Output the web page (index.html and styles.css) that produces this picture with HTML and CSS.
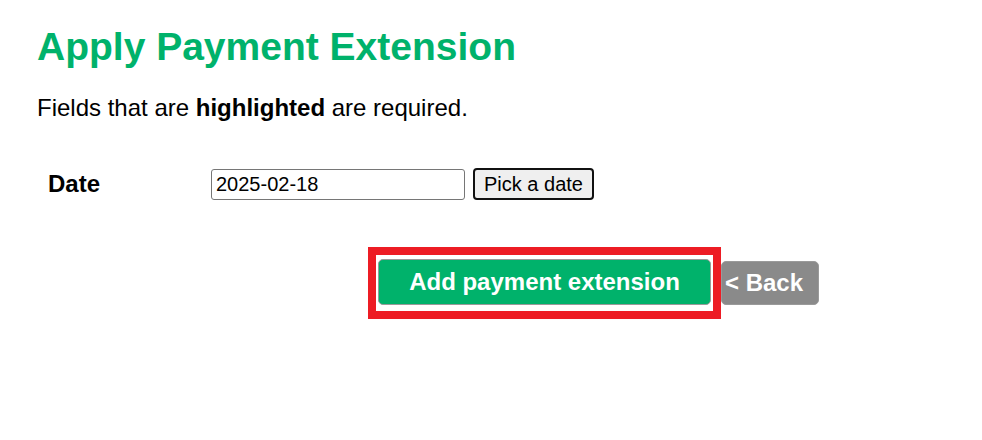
FILE: index.html
```html
<!DOCTYPE html>
<html lang="en">
<head>
<meta charset="utf-8">
<title>Apply Payment Extension</title>
<link rel="stylesheet" href="styles.css">
</head>
<body>
<div class="page">
  <h1 class="title">Apply Payment Extension</h1>
  <p class="note">Fields that are <strong>highlighted</strong> are required.</p>
  <form class="form">
    <div class="row">
      <label class="label" for="date">Date</label>
      <div class="field">
        <input class="input" id="date" type="text" value="2025-02-18">
        <button class="pick" type="button">Pick a date</button>
      </div>
    </div>
    <div class="actions">
      <span class="highlight"><button class="primary" type="button">Add payment extension</button></span>
      <button class="back" type="button">&lt; Back</button>
    </div>
  </form>
</div>
</body>
</html>
```

FILE: styles.css
```css
html, body {
  margin: 0;
  padding: 0;
  background: #ffffff;
}

body {
  font-family: "Liberation Sans", Arial, sans-serif;
  color: #000000;
}

.page {
  padding: 24px 0 0 37px;
}

.title {
  margin: 0;
  font-size: 39px;
  line-height: 45px;
  font-weight: bold;
  color: #00b26b;
}

.note {
  margin: 25px 0 0 0;
  font-size: 24px;
  line-height: 28px;
}

.note strong {
  font-weight: bold;
}

.form {
  margin: 0;
}

.row {
  display: flex;
  align-items: center;
  margin-top: 46px;
  height: 32px;
}

.label {
  width: 174px;
  padding-left: 11px;
  box-sizing: border-box;
  font-size: 24px;
  line-height: 28px;
  font-weight: bold;
}

.field {
  display: flex;
  align-items: center;
  gap: 8px;
}

.input {
  width: 254px;
  height: 31px;
  box-sizing: border-box;
  border: 1px solid #767676;
  border-radius: 3px;
  padding: 0 4px;
  font-family: "Liberation Sans", Arial, sans-serif;
  font-size: 20px;
  color: #000000;
  background: #ffffff;
  margin: 0;
}

.pick {
  height: 32px;
  box-sizing: border-box;
  border: 2px solid #111111;
  border-radius: 4px;
  background: #efefef;
  padding: 0 9px;
  font-family: "Liberation Sans", Arial, sans-serif;
  font-size: 20px;
  color: #000000;
  margin: 0;
}

.actions {
  display: flex;
  align-items: center;
  margin-top: 47px;
  padding-left: 331px;
}

.highlight {
  display: inline-flex;
  border: 8px solid #ed1c24;
  padding: 4px 2px 6px 2px;
}

.primary {
  width: 333px;
  height: 46px;
  box-sizing: border-box;
  border: 1px solid #9a9a9a;
  border-radius: 5px;
  background: #00b26b;
  color: #ffffff;
  font-family: "Liberation Sans", Arial, sans-serif;
  font-size: 24px;
  font-weight: bold;
  padding: 0;
  margin: 0;
}

.back {
  width: 98px;
  height: 44px;
  box-sizing: border-box;
  border: 1px solid #9a9a9a;
  border-radius: 5px;
  background: #8a8a8a;
  color: #ffffff;
  font-family: "Liberation Sans", Arial, sans-serif;
  font-size: 24px;
  font-weight: bold;
  padding: 0 14px 0 3px;
  text-align: left;
  margin: 0;
}
```
